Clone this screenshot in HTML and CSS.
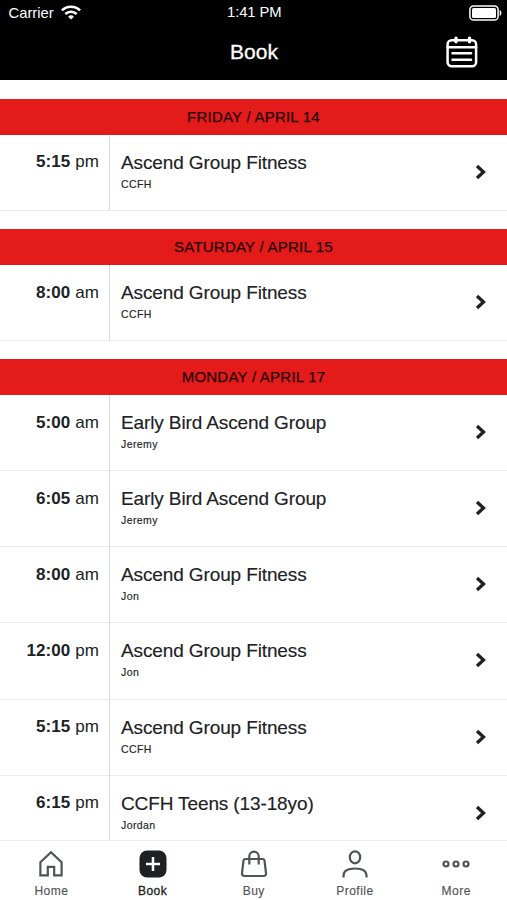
FILE: index.html
```html
<!DOCTYPE html>
<html lang="en">
<head>
<meta charset="utf-8">
<title>Book</title>
<link rel="stylesheet" href="styles.css">
</head>
<body>
<div class="app">
  <header class="header">
    <div class="status">
      <div class="carrier"><span class="carrier-name">Carrier</span>
        <svg class="wifi" viewBox="0 0 20 15" width="20" height="15" fill="none" stroke="#fff" stroke-width="2.5"><path d="M.9 5.4a13 13 0 0 1 18.2 0M4.3 9a8.2 8.2 0 0 1 11.4 0"/><path d="M10 14.6 7.1 11.7a4.2 4.2 0 0 1 5.8 0z" fill="#fff" stroke="none"/></svg>
      </div>
      <span class="clock">1:41 PM</span>
      <svg class="battery" viewBox="0 0 33 16" width="33" height="16"><rect x=".9" y=".9" width="28.2" height="14.2" rx="3.6" fill="none" stroke="#fff" stroke-width="1.5"/><rect x="3" y="3" width="24" height="10" rx="1.5" fill="#fff"/><path d="M30.7 5c2.3.8 2.3 5.200 0 6z" fill="#fff"/></svg>
    </div>
    <div class="titlebar">
      <h1 class="title">Book</h1>
      <svg class="calendar" viewBox="0 0 32 32" width="32" height="32" fill="none" stroke="#fff" stroke-width="2.5" stroke-linecap="round"><rect x="1.600" y="4.300" width="28.500" height="26" rx="4"/><path d="M1.600 11.300h28.500M6.500 17.300h18.500M6.500 23.700h18.500"/><path d="M10 2.300v3.500M23.500 2.300v3.500" stroke-width="3.400"/></svg>
    </div>
  </header>
  <main class="schedule">
    <section class="day">
      <h2 class="date">FRIDAY / APRIL 14</h2>
      <article class="row"><div class="time"><b>5:15</b> pm</div><div class="info"><h3>Ascend Group Fitness</h3><p>CCFH</p></div><svg class="chev" viewBox="0 0 12 16" width="12" height="16"><path d="m2 2 6.500 6L2 14"/></svg></article>
    </section>
    <section class="day">
      <h2 class="date">SATURDAY / APRIL 15</h2>
      <article class="row"><div class="time"><b>8:00</b> am</div><div class="info"><h3>Ascend Group Fitness</h3><p>CCFH</p></div><svg class="chev" viewBox="0 0 12 16" width="12" height="16"><path d="m2 2 6.500 6L2 14"/></svg></article>
    </section>
    <section class="day">
      <h2 class="date">MONDAY / APRIL 17</h2>
      <article class="row"><div class="time"><b>5:00</b> am</div><div class="info"><h3>Early Bird Ascend Group</h3><p>Jeremy</p></div><svg class="chev" viewBox="0 0 12 16" width="12" height="16"><path d="m2 2 6.500 6L2 14"/></svg></article>
      <article class="row"><div class="time"><b>6:05</b> am</div><div class="info"><h3>Early Bird Ascend Group</h3><p>Jeremy</p></div><svg class="chev" viewBox="0 0 12 16" width="12" height="16"><path d="m2 2 6.500 6L2 14"/></svg></article>
      <article class="row"><div class="time"><b>8:00</b> am</div><div class="info"><h3>Ascend Group Fitness</h3><p>Jon</p></div><svg class="chev" viewBox="0 0 12 16" width="12" height="16"><path d="m2 2 6.500 6L2 14"/></svg></article>
      <article class="row"><div class="time"><b>12:00</b> pm</div><div class="info"><h3>Ascend Group Fitness</h3><p>Jon</p></div><svg class="chev" viewBox="0 0 12 16" width="12" height="16"><path d="m2 2 6.500 6L2 14"/></svg></article>
      <article class="row"><div class="time"><b>5:15</b> pm</div><div class="info"><h3>Ascend Group Fitness</h3><p>CCFH</p></div><svg class="chev" viewBox="0 0 12 16" width="12" height="16"><path d="m2 2 6.500 6L2 14"/></svg></article>
      <article class="row"><div class="time"><b>6:15</b> pm</div><div class="info"><h3>CCFH Teens (13-18yo)</h3><p>Jordan</p></div><svg class="chev" viewBox="0 0 12 16" width="12" height="16"><path d="m2 2 6.500 6L2 14"/></svg></article>
    </section>
  </main>
  <nav class="tabs">
    <a class="tab"><svg viewBox="0 0 30 30" width="30" height="30"><path d="M4.400 26.400V13.200L15 3.200l10.600 10v13.200h-7.400v-8.600h-6.400v8.600z"/></svg><span>Home</span></a>
    <a class="tab active"><svg viewBox="0 0 30 30" width="30" height="30"><rect x="1.500" y="1.500" width="27" height="27" rx="7.500" fill="#202124" stroke="none"/><path d="M15 8v14M8 15h14" stroke="#fff" stroke-width="2.500"/></svg><span>Book</span></a>
    <a class="tab"><svg viewBox="0 0 30 30" width="30" height="30"><path d="M6.300 10h17.400q1.500 0 1.800 1.500l1.500 12.500q.300 3-2.700 3h-18.600q-3 0-2.700-3l1.500-12.500Q4.800 10 6.300 10zM10.300 15.500V7.300a4.700 4.700 0 0 1 9.400 0v8.200"/></svg><span>Buy</span></a>
    <a class="tab"><svg viewBox="0 0 30 30" width="30" height="30"><ellipse cx="15" cy="8.300" rx="5.200" ry="6"/><path d="M3.500 28.500v-1.700c0-4.500 4-7.300 11.500-7.300s11.500 2.800 11.500 7.300v1.700"/></svg><span>Profile</span></a>
    <a class="tab"><svg viewBox="0 0 30 30" width="30" height="30"><circle cx="5" cy="15" r="2.500"/><circle cx="15" cy="15" r="2.500"/><circle cx="25" cy="15" r="2.500"/></svg><span>More</span></a>
  </nav>
</div>
</body>
</html>
```
FILE: styles.css
```css
* { box-sizing: border-box; }
body, h1, h2, h3, p { margin: 0; font-weight: 400; }
body { font-family: "Liberation Sans", Arial, sans-serif; color: #202124; background: #fff; }
.app { height: 900px; display: flex; flex-direction: column; overflow: hidden; }
.header { height: 80px; flex: none; background: #000; color: #fff; }
.status { height: 25px; display: grid; grid-template-columns: 1fr auto 1fr; align-items: center; padding: 0 5px 0 8.500px; }
.carrier { display: flex; align-items: center; gap: 7px; font-size: 14.800px; }
.clock { font-size: 14.800px; letter-spacing: -.1px; transform: translate(-1px, -1px); }
.carrier-name { transform: translateY(-.5px); }
.battery { justify-self: end; }
.titlebar { height: 53px; display: grid; grid-template-columns: 1fr auto 1fr; align-items: center; padding: 0 29px 0 30px; }
.title { grid-column: 2; font-size: 21px; line-height: 24px; -webkit-text-stroke: .3px #fff; }
.calendar { justify-self: end; }
.schedule { flex: 1; min-height: 0; overflow: hidden; padding-top: .4px; }
.day { padding-top: 18.200px; }
.date { height: 36px; background: #e31b1b; color: #260303; font-size: 15px; line-height: 35.500px; text-align: center; letter-spacing: .23px; -webkit-text-stroke: .25px #260303; }
.row { height: 76.100px; display: flex; border-bottom: 1px solid #e7eaeb; }
.time { width: 110px; flex: none; border-right: 1px solid #d9dcdf; padding: 17.800px 10px 0 0; text-align: right; font-size: 17px; line-height: 20px; letter-spacing: .1px; }
.info { flex: 1; padding: 16px 0 0 11px; }
.info h3 { font-size: 19px; line-height: 23px; letter-spacing: -.12px; -webkit-text-stroke: .15px #202124; }
.info p { font-size: 10.500px; line-height: 12px; margin-top: 4px; letter-spacing: .4px; -webkit-text-stroke: .15px #202124; }
.chev { align-self: center; margin: 0 20px 1px 0; fill: none; stroke: #202124; stroke-width: 3.300; }
.tabs { height: 60px; flex: none; display: grid; grid-template-columns: repeat(5, 101.200px); padding-left: .8px; border-top: 1px solid #efefef; background: #fff; }
.tab { display: flex; flex-direction: column; align-items: center; padding-top: 8px; font-size: 12px; line-height: 14px; letter-spacing: .5px; color: #505458; -webkit-text-stroke: .15px #505458; }
.tab svg { fill: none; stroke: #505458; stroke-width: 2.200; }
.tab span { margin-top: 5px; }
.active { color: #202124; -webkit-text-stroke: .3px #202124; }
```
